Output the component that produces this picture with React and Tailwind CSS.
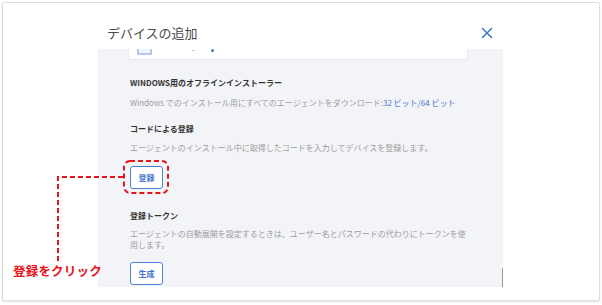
import React from "react";

const jp = { fontFamily: '"Noto Sans CJK JP", "Noto Sans", sans-serif' };

export default function App() {
  return (
    <div className="w-[602px] h-[305px] bg-white p-[2px]" style={jp}>
      <div className="relative h-[299px] border border-[#dedede] rounded-[2px] shadow-[0_1px_2px_rgba(0,0,0,0.12)] bg-white">
        {/* Modal */}
        <div className="ml-[95px] w-[405px] flex flex-col">
          <div className="h-[46px] flex items-end justify-between pb-[7px]">
            <div className="pl-[9px] text-[13px] leading-[18px] text-[#4a4a4a]">デバイスの追加</div>
            <svg width="12" height="12" viewBox="0 0 12 12" className="mr-[10px] mb-[3px]">
              <path d="M1 1 L11 11 M11 1 L1 11" stroke="#3f73cf" strokeWidth="1.5" fill="none" />
            </svg>
          </div>
          <div className="relative h-[238px] bg-[#f3f4f7] overflow-hidden">
            <div className="pl-[30px] pr-[35px]">
              <div className="h-[11px] bg-white border border-t-0 border-[#e6e7ea] rounded-b-[3px] flex items-start">
                <div className="ml-[8px] w-[15px] h-[6px] border-x-2 border-b-2 border-[#b4c8ee] bg-[#eef3fc] rounded-b-[1px]" />
                <div className="ml-[40px] mt-[1px] w-[3px] h-[1px] bg-[#c9c9c9]" />
                <div className="ml-[16px] w-[3px] h-[3px] rounded-full bg-[#3f73cf]" />
              </div>
            </div>
            <div className="pl-[32px] pr-[33px] flex flex-col items-start">
              <div className="mt-[17px] text-[8px] leading-[12px] font-bold text-[#333]">WINDOWS用のオフラインインストーラー</div>
              <div className="mt-[8px] text-[8px] leading-[12px] text-[#9d9d9d] whitespace-nowrap">
                Windows でのインストール用にすべてのエージェントをダウンロード:
                <span className="text-[#3f73cf]">32 ビット</span>
                <span className="text-[#3f73cf]">/</span>
                <span className="text-[#3f73cf]">64 ビット</span>
              </div>
              <div className="mt-[14px] text-[8px] leading-[12px] font-bold text-[#333]">コードによる登録</div>
              <div className="mt-[7px] text-[8px] leading-[12px] text-[#9d9d9d]">エージェントのインストール中に取得したコードを入力してデバイスを登録します。</div>
              <button className="mt-[12px] w-[33px] h-[23px] bg-white border border-[#4c81d9] rounded-[3px] text-[8px] font-bold text-[#3f73cf] flex items-center justify-center">登録</button>
              <div className="mt-[21px] text-[8px] leading-[12px] font-bold text-[#333]">登録トークン</div>
              <div className="mt-[6px] w-[342px] text-[8px] leading-[11px] text-[#9d9d9d]">エージェントの自動展開を設定するときは、ユーザー名とパスワードの代わりにトークンを使用します。</div>
              <button className="mt-[12px] w-[33px] h-[23px] bg-white border border-[#4c81d9] rounded-[3px] text-[8px] font-bold text-[#3f73cf] flex items-center justify-center">生成</button>
            </div>
            <div className="absolute right-[0px] bottom-0 w-[1.5px] h-[19px] bg-[#9a9a9a]" />
          </div>
        </div>

        {/* Annotation overlay */}
        <svg className="absolute left-[-3px] top-[-3px]" width="602" height="305" viewBox="0 0 602 305">
          <rect x="124" y="161" width="44" height="32" rx="6" ry="6" fill="none" stroke="#e8141e" strokeWidth="2" strokeDasharray="5 3" />
          <path d="M123 177 L58 177 L58 264" fill="none" stroke="#e8141e" strokeWidth="2" strokeDasharray="5 3" />
        </svg>
        <div className="absolute left-[10px] top-[260px] text-[12.5px] leading-[16px] font-bold text-[#e8141e] tracking-[0.2px]">登録をクリック</div>
      </div>
    </div>
  );
}
